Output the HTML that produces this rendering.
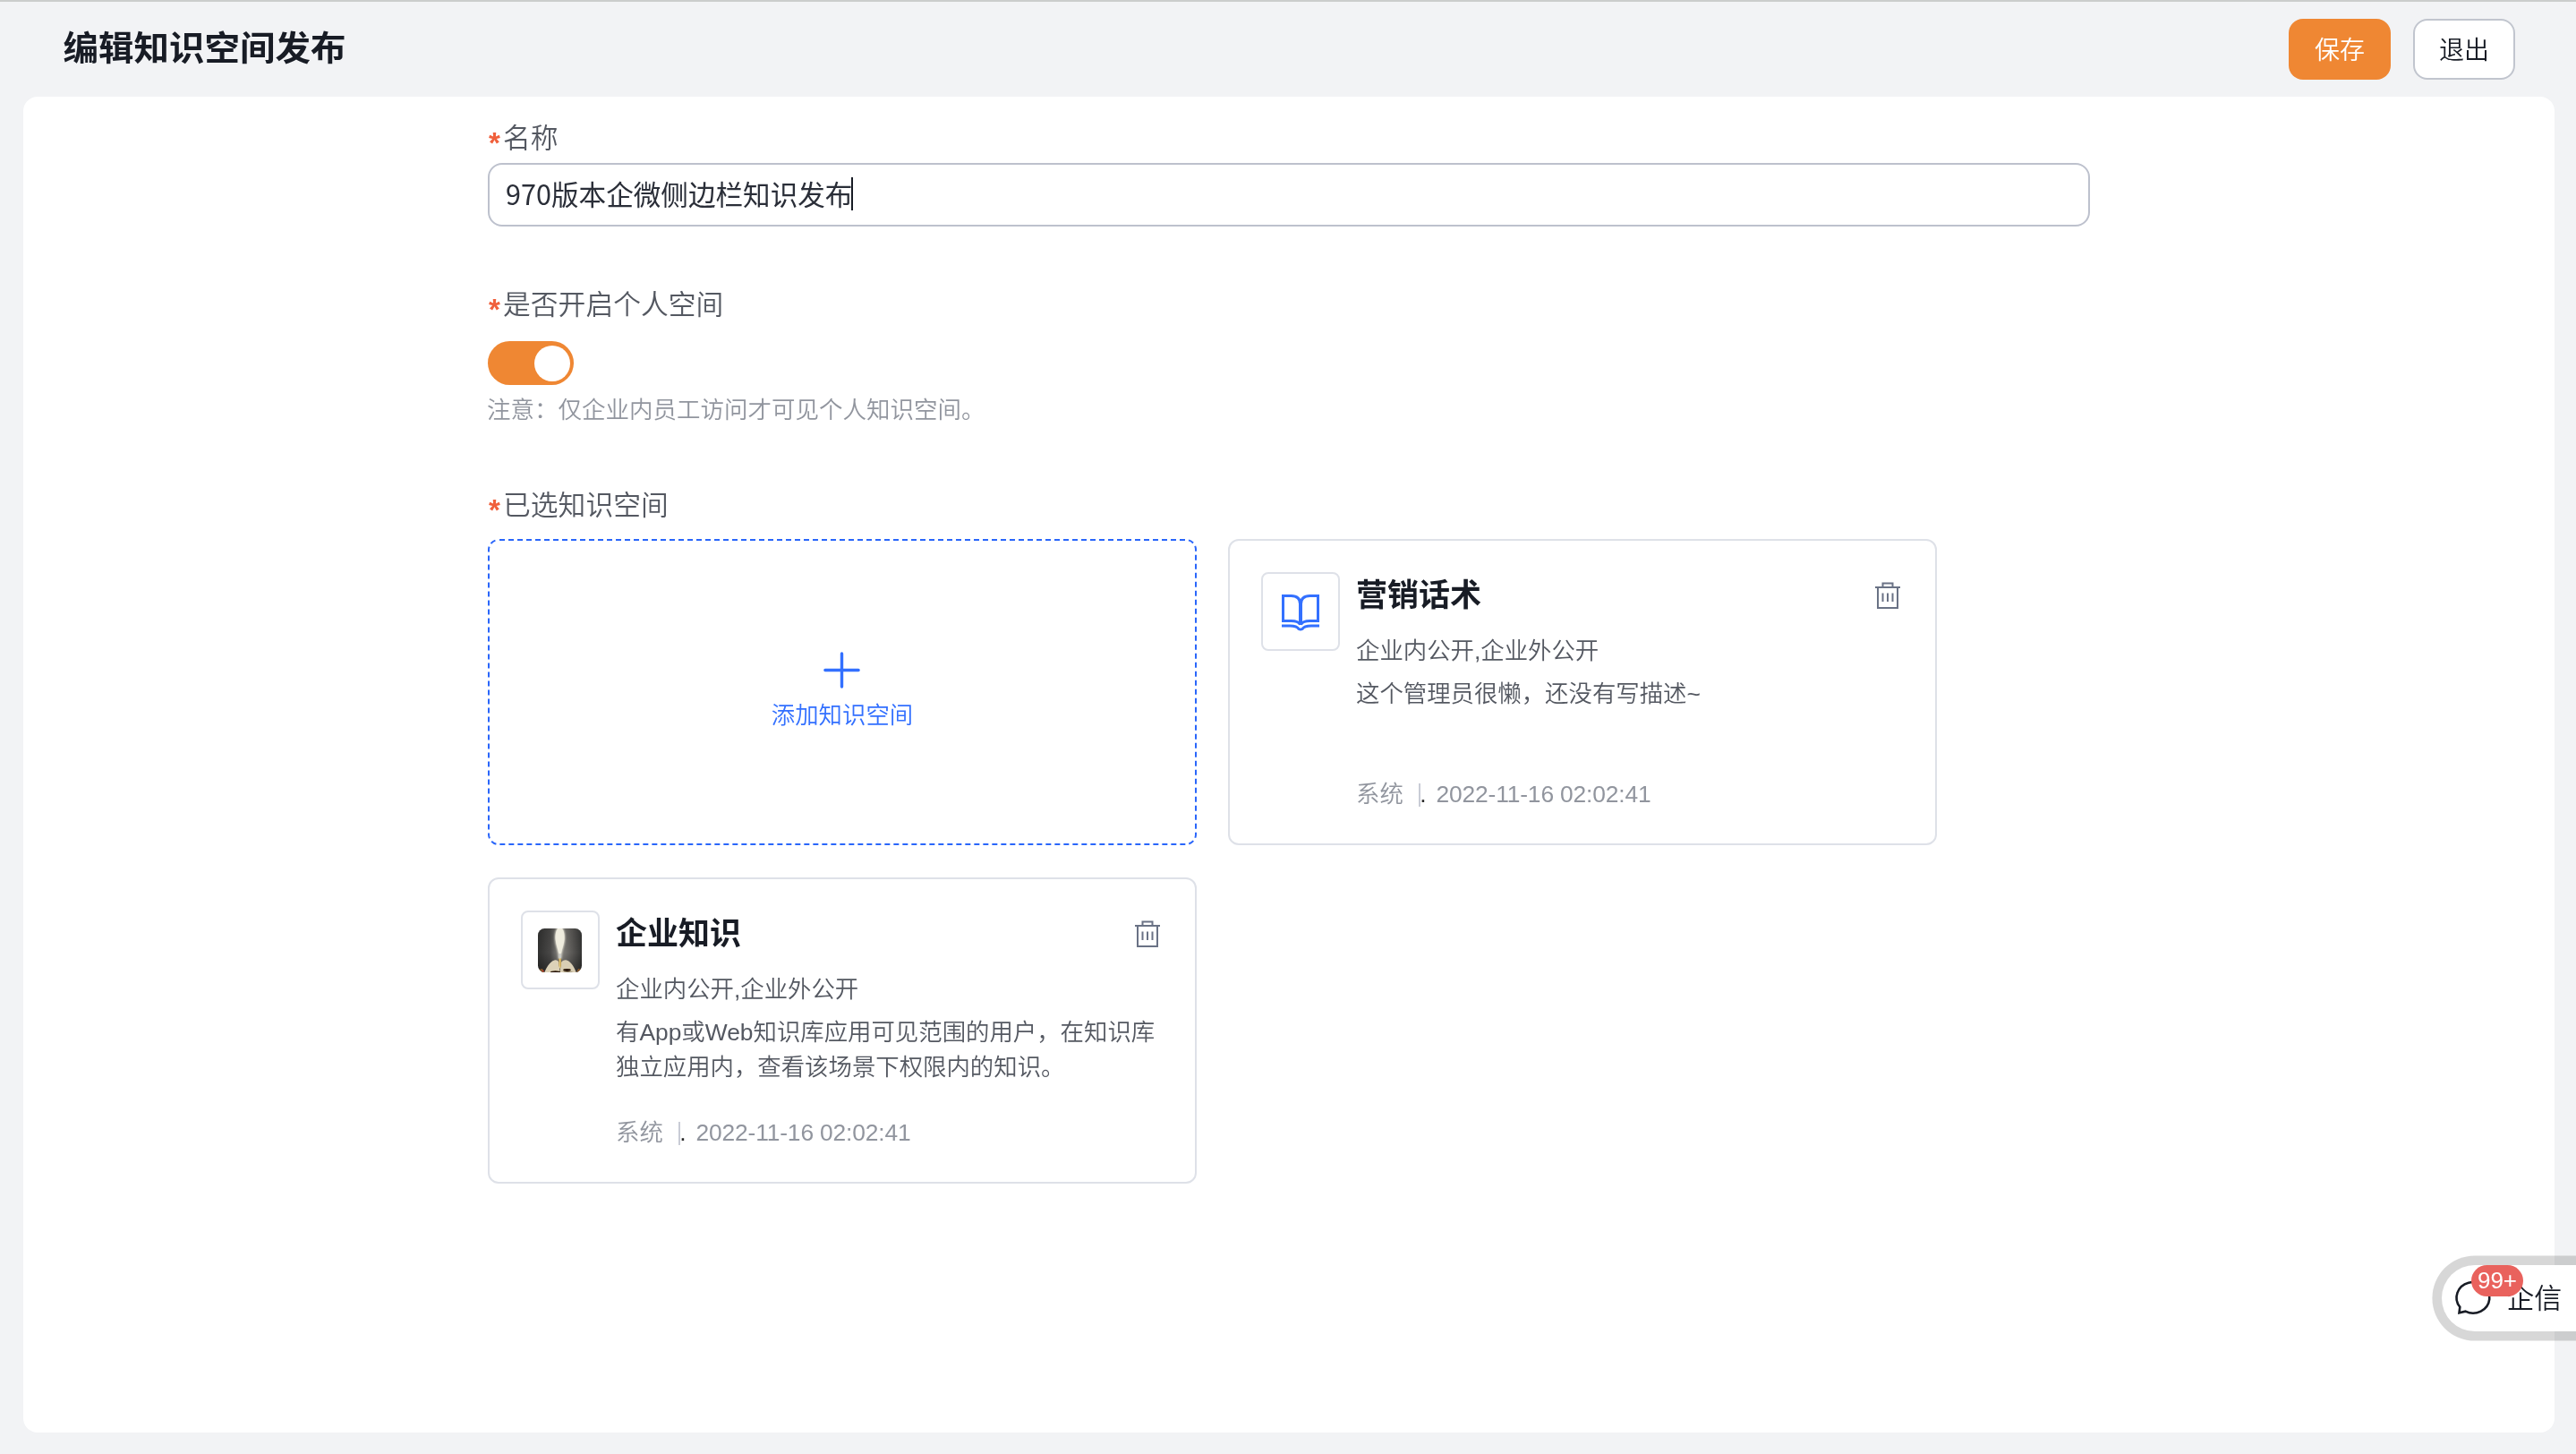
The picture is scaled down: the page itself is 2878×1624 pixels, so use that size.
<!DOCTYPE html>
<html lang="zh-CN">
<head>
<meta charset="utf-8">
<title>编辑知识空间发布</title>
<style>
*{box-sizing:border-box;margin:0;padding:0}
html,body{width:2878px;height:1624px;overflow:hidden}
body{position:relative;background:#f2f3f5;font-family:"Liberation Sans","Noto Sans CJK SC",sans-serif;color:#181c25;-webkit-font-smoothing:antialiased}
#page{position:absolute;left:0;top:0;width:2878px;height:1624px;overflow:hidden;will-change:transform;background:#f2f3f5}
.abs{position:absolute}
.t{position:absolute;white-space:nowrap;line-height:1}
#topline{left:0;top:0;width:2878px;height:2px;background:#cbcdcc}
#title{left:70.6px;top:34.1px;font-size:39.5px;font-weight:700;color:#181c25;line-height:40px;transform:scaleY(.96);transform-origin:0 50%}
.btn{font-weight:350;position:absolute;top:21px;width:114px;height:68px;border-radius:16px;font-size:28px;line-height:68px;padding-top:2px;text-align:center}
#save{left:2557px;background:#ef8733;color:#fff}
#exit{left:2696px;background:#fff;border:2px solid #c1c5ce;color:#181c25;line-height:64px}
#panel{left:26px;top:108px;width:2828px;height:1492px;background:#fff;border-radius:16px}
.lbl{font-weight:350;font-size:30.8px;color:#545861;left:545px}
.lbl i{font-style:normal;color:#f0603c;display:inline-block;width:17px;font-size:33px;font-weight:700;line-height:0;position:relative;top:5.9px;left:1px}
#input{left:545px;top:182px;width:1790px;height:71px;border:2px solid #bdc1cd;border-radius:16px;background:#fff}
#inputtxt{left:565px;top:201px;font-size:30.6px;color:#2a2e38;font-family:"Noto Sans CJK SC",sans-serif}
#caret{left:951px;top:198px;width:2px;height:37px;background:#181c25}
#toggle{left:545px;top:381px;width:96px;height:49px;border-radius:24.5px;background:#ef8733}
#knob{left:597px;top:385.5px;width:40px;height:40px;border-radius:20px;background:#fff}
#note{font-weight:350;left:544px;top:445px;font-size:26.5px;color:#91959e}
.card{position:absolute;width:792px;height:342px;border:2px solid #dee1e8;border-radius:12px;background:#fff}
.ibox{position:absolute;left:35px;top:35px;width:88px;height:88px;border:2px solid #dee1e8;border-radius:8px;background:#fff}
.ctitle{left:141px;top:43px;font-size:35px;font-weight:700;color:#181c25}
.csub{font-weight:350;left:141px;top:110px;font-size:26.4px;color:#545861}
.cdesc{font-weight:350;position:absolute;left:141px;top:152px;width:640px;white-space:nowrap;font-size:26.4px;line-height:39px;color:#545861}
.cfoot{font-weight:350;left:141px;top:270px;font-size:26.4px;color:#91959e}
.sep{display:inline-block;width:2px;height:26px;background:#c9ccd6;vertical-align:-5px;margin-left:17px}
.dot{color:#2a2a2a;margin-left:-.6px;margin-right:3.6px}
.dt{letter-spacing:-.16px}
.trash{position:absolute;left:716px;top:42px;width:38px;height:38px}
#fx{left:2727.8px;top:1412.5px;width:200px;height:74.7px;border-radius:37.4px 0 0 37.4px;background:#fff;box-shadow:0 0 0 10.6px rgba(0,0,0,.155)}
#fxtxt{font-weight:350;left:72.4px;top:22.5px;font-size:31px;color:#181c25}
#badge{left:33.2px;top:.5px;width:58px;height:35px;border-radius:17.5px;background:#e9625d;color:#fff;font-size:26px;line-height:34px;text-align:center}
</style>
</head>
<body>
<div id="page">
<div class="abs" id="topline"></div>
<div class="t" id="title">编辑知识空间发布</div>
<div class="btn" id="save">保存</div>
<div class="btn" id="exit">退出</div>
<div class="abs" id="panel"></div>

<div class="t lbl" style="top:140.3px"><i>*</i>名称</div>
<div class="abs" id="input"></div>
<div class="t" id="inputtxt">970版本企微侧边栏知识发布</div>
<div class="abs" id="caret"></div>

<div class="t lbl" style="top:326.3px"><i>*</i>是否开启个人空间</div>
<div class="abs" id="toggle"></div>
<div class="abs" id="knob"></div>
<div class="t" id="note">注意：仅企业内员工访问才可见个人知识空间。</div>

<div class="t lbl" style="top:550.3px"><i>*</i>已选知识空间</div>

<!-- add box -->
<svg class="abs" style="left:545px;top:602px" width="792" height="342" viewBox="0 0 792 342">
  <rect x="1" y="1" width="790" height="340" rx="11" ry="11" fill="#fff" stroke="#2a66fa" stroke-width="2" stroke-dasharray="6 4" stroke-dashoffset="-1"/>
  <path d="M376.9 146.5h37.2M395.5 127.9v37.2" stroke="#3370ff" stroke-width="3.4" stroke-linecap="round" fill="none"/>
</svg>
<div class="t" style="left:545px;width:792px;text-align:center;top:786px;font-size:26.4px;font-weight:350;color:#3370ff">添加知识空间</div>

<!-- card 1 -->
<div class="card" style="left:1372px;top:602px">
  <div class="ibox">
    <svg class="abs" style="left:19px;top:21px" width="46" height="44" viewBox="0 0 46 44" fill="none" stroke="#3370ff" stroke-width="3">
      <path d="M3.5 3.5h9q10 0 10 9v23q-2-4-10-4h-9zM42.5 3.5h-9q-10 0-10 9v23q2-4 10-4h9z"/>
      <path d="M2 37h9q8 0 10 3.5q2 1 4 0q2-3.5 10-3.5h9"/>
    </svg>
  </div>
  <div class="t ctitle">营销话术</div>
  <div class="t csub">企业内公开,企业外公开</div>
  <div class="cdesc">这个管理员很懒，还没有写描述~</div>
  <div class="t cfoot">系统<span class="sep"></span><span class="dot">.</span> <span class="dt">2022-11-16 02:02:41</span></div>
  <svg class="trash" viewBox="0 0 38 38" fill="none" stroke="#6a7285" stroke-width="2"><path d="M5 10h28M13.5 10v-4.5h11v4.5M8 10v23h22v-23M13.5 16.5v9.6M19 16.5v9.6M24.5 16.5v9.6"/></svg>
</div>

<!-- card 2 -->
<div class="card" style="left:545px;top:980px">
  <div class="ibox">
    <svg class="abs" style="left:17px;top:18px" width="49" height="49" viewBox="0 0 49 49">
      <defs>
        <clipPath id="tc"><rect width="49" height="49" rx="7.5" ry="7.5"/></clipPath>
        <linearGradient id="tbg" x1="0" x2="1" y1="0" y2="0"><stop offset="0" stop-color="#313130"/><stop offset=".28" stop-color="#494847"/><stop offset=".46" stop-color="#7f7d79"/><stop offset=".56" stop-color="#7f7d79"/><stop offset=".74" stop-color="#615f5c"/><stop offset="1" stop-color="#353534"/></linearGradient>
        <linearGradient id="tsh" x1="0" x2="0" y1="0" y2="1"><stop offset="0" stop-color="#000" stop-opacity=".1"/><stop offset=".55" stop-color="#000" stop-opacity="0"/><stop offset="1" stop-color="#000" stop-opacity=".35"/></linearGradient>
        <linearGradient id="tnib" x1="0" x2="1" y1="0" y2="0"><stop offset="0" stop-color="#b8892c"/><stop offset=".5" stop-color="#f0d98a"/><stop offset="1" stop-color="#b08024"/></linearGradient>
        <filter id="tb1" x="-50%" y="-50%" width="200%" height="200%"><feGaussianBlur stdDeviation="0.9"/></filter>
        <filter id="tb2" x="-50%" y="-50%" width="200%" height="200%"><feGaussianBlur stdDeviation="0.5"/></filter>
      </defs>
      <g clip-path="url(#tc)">
        <rect width="49" height="49" fill="url(#tbg)"/>
        <rect width="49" height="49" fill="url(#tsh)"/>
        <path d="M0 46l5-1 2 4H0zM49 45.5l-4-.5-2 4h6z" fill="#8a5a2c" filter="url(#tb2)"/>
        <circle cx="5.7" cy="47.5" r=".9" fill="#c8322c" filter="url(#tb2)"/>
        <path d="M24.6 -2c4 0 6 7 5.6 14-.4 6-2.6 11-3.4 15-.4 2-.5 4-.6 7h-3.2c-.1-3-.2-5-.6-7-.8-4-3-9-3.4-15-.4-7 1.6-14 5.6-14z" fill="#e6e3d5" filter="url(#tb1)"/>
        <path d="M24.6 -1c3.8 0 5.4 6.5 5 13-.4 6-2.8 10.5-3.6 16h-2.8c-.8-5.5-3.2-10-3.6-16-.4-6.5 1.2-13 5-13z" fill="#efecde" filter="url(#tb2)"/>
        <rect x="23.2" y="28.5" width="2.8" height="5.5" fill="#c9c9c6" filter="url(#tb2)"/>
        <path d="M7 50c1.5-5 6-13.2 11.5-14.6 2.4-.6 4.3.9 5.1 2.6l.8 12z" fill="#ddd2b8" filter="url(#tb2)"/>
        <path d="M43 50c-1.5-5-5.5-13.2-11-14.6-2.4-.6-5 .9-6.2 2.6l-1.4 12z" fill="#d9ceb4" filter="url(#tb2)"/>
        <path d="M23.3 33.5h2.7l-.2 8.5-1.1 3.2-1.2-3.2z" fill="url(#tnib)"/>
        <ellipse cx="19.5" cy="48.7" rx="5.5" ry="1.5" fill="#2a1808" filter="url(#tb2)"/>
        <ellipse cx="32.5" cy="46.5" rx="4.3" ry="1.4" fill="#2a1808" filter="url(#tb2)"/>
        <ellipse cx="33.5" cy="49.3" rx="6" ry=".9" fill="#2a1808" filter="url(#tb2)"/>
      </g>
    </svg>
  </div>
  <div class="t ctitle">企业知识</div>
  <div class="t csub">企业内公开,企业外公开</div>
  <div class="cdesc">有App或Web知识库应用可见范围的用户，在知识库<br>独立应用内，查看该场景下权限内的知识。</div>
  <div class="t cfoot">系统<span class="sep"></span><span class="dot">.</span> <span class="dt">2022-11-16 02:02:41</span></div>
  <svg class="trash" viewBox="0 0 38 38" fill="none" stroke="#6a7285" stroke-width="2"><path d="M5 10h28M13.5 10v-4.5h11v4.5M8 10v23h22v-23M13.5 16.5v9.6M19 16.5v9.6M24.5 16.5v9.6"/></svg>
</div>


<!-- floating qixin widget -->
<div class="abs" id="fx">
  <svg class="abs" style="left:12.2px;top:15.5px" width="46" height="44" viewBox="0 0 46 44" fill="none" stroke="#181c25" stroke-width="2.6" stroke-linejoin="miter">
    <path d="M14.5 36.7A18.4 17.3 0 1 0 8.3 31.8L7.5 38.3z"/>
  </svg>
  <div class="t" id="fxtxt">企信</div>
  <div class="abs" id="badge">99+</div>
</div>
</div>
</body>
</html>
